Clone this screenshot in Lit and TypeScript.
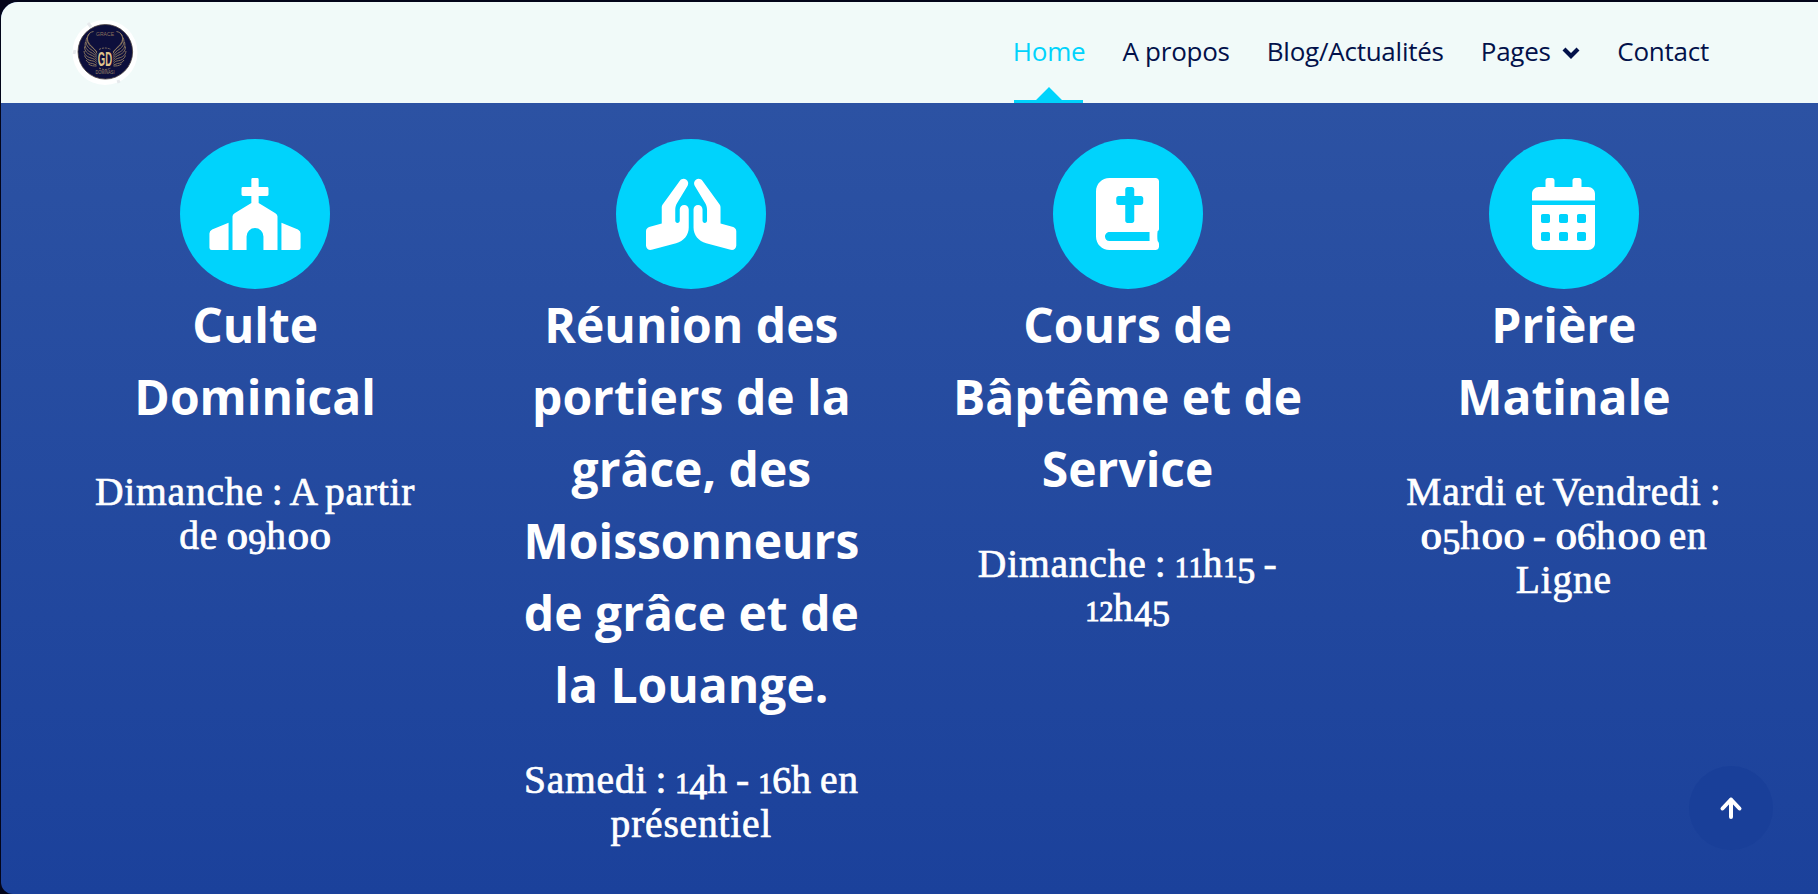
import { LitElement, html, css, svg } from "lit";
import { customElement } from "lit/decorators.js";

const church = svg`<path d="M304 0h32a10 10 0 0 1 10 10v54h60a10 10 0 0 1 10 10v44a10 10 0 0 1-10 10h-60v50l119 72q15 9 15 23v239H380V416a60 60 0 0 0-120 0v96H160V273q0-14 15-23l119-72v-50h-60a10 10 0 0 1-10-10V74a10 10 0 0 1 10-10h60V10a10 10 0 0 1 10-10zM-4 395q0-20 19-29l117-48v194H12q-16 0-16-16zM644 395q0-20-19-29l-117-48v194h120q16 0 16-16z"/>`;
const hand = "M272 192c-17.700 0-32 14.300-32 32v80c0 8.800-7.200 16-16 16s-16-7.200-16-16v-76.700c0-17.300 4.700-34.200 13.600-49l74.200-123.600c9.100-15.200 4.200-34.800-11-43.900s-33.400-4.200-44 9L117.200 190.300C111 199.500 112 210 112 220v102.900L21.900 348.900C8.800 353.300 0 365.500 0 379.200V480c0 21 19.800 36.400 40.200 31l173.600-46.900C268.700 449.400 304 405.400 304 352V224c0-17.700-14.300-32-32-32z";
const hands = svg`<path d=${hand}/><path d=${hand} transform="translate(642 0) scale(-1 1)"/>`;
const bible = svg`<path fill-rule="evenodd" d="M448 358.400V25.600C448 9.600 438.400 0 422.400 0H96C41.600 0 0 41.600 0 96v320c0 54.400 41.600 96 96 96h326.400c12.800 0 25.600-9.600 25.600-25.600v-16c0-9.600-3.200-16-9.600-22.400-3.200-16-3.200-54.400 0-70.400 6.400-3.200 9.600-9.600 9.600-19.200zM144 144c0-8.800 7.200-16 16-16h48V80c0-8.800 7.200-16 16-16h32c8.800 0 16 7.200 16 16v48h48c8.800 0 16 7.200 16 16v32c0 8.800-7.200 16-16 16h-48v112c0 8.800-7.200 16-16 16h-32c-8.800 0-16-7.200-16-16V192h-48c-8.800 0-16-7.200-16-16zM380.800 448H96c-19.200 0-32-12.800-32-32s16-32 32-32h284.800z"/>`;
const calendar = svg`<path fill-rule="evenodd" d="M0 464c0 26.500 21.500 48 48 48h352c26.500 0 48-21.500 48-48V192H0zm320-196c0-6.600 5.400-12 12-12h40c6.600 0 12 5.400 12 12v40c0 6.600-5.400 12-12 12h-40c-6.600 0-12-5.400-12-12zm0 128c0-6.600 5.400-12 12-12h40c6.600 0 12 5.400 12 12v40c0 6.600-5.400 12-12 12h-40c-6.600 0-12-5.400-12-12zM192 268c0-6.600 5.400-12 12-12h40c6.600 0 12 5.400 12 12v40c0 6.600-5.400 12-12 12h-40c-6.600 0-12-5.400-12-12zm0 128c0-6.600 5.400-12 12-12h40c6.600 0 12 5.400 12 12v40c0 6.600-5.400 12-12 12h-40c-6.600 0-12-5.400-12-12zM64 268c0-6.600 5.400-12 12-12h40c6.600 0 12 5.400 12 12v40c0 6.600-5.400 12-12 12H76c-6.600 0-12-5.400-12-12zm0 128c0-6.600 5.400-12 12-12h40c6.600 0 12 5.400 12 12v40c0 6.600-5.400 12-12 12H76c-6.600 0-12-5.400-12-12zM400 64h-48V16c0-8.800-7.200-16-16-16h-32c-8.800 0-16 7.200-16 16v48H160V16c0-8.800-7.200-16-16-16h-32c-8.800 0-16 7.200-16 16v48H48C21.500 64 0 85.500 0 112v48h448v-48c0-26.500-21.500-48-48-48z"/>`;

const services = [
  { icon: church, box: "0 0 640 512", title: ["Culte", "Dominical"], time: ["Dimanche : A partir", "de 09h00"] },
  { icon: hands, box: "0 0 640 512", title: ["Réunion des", "portiers de la", "grâce, des", "Moissonneurs", "de grâce et de", "la Louange."], time: ["Samedi : 14h - 16h en", "présentiel"] },
  { icon: bible, box: "0 0 448 512", title: ["Cours de", "Bâptême et de", "Service"], time: ["Dimanche : 11h15 -", "12h45"] },
  { icon: calendar, box: "0 0 448 512", title: ["Prière", "Matinale"], time: ["Mardi et Vendredi :", "05h00 - 06h00 en", "Ligne"] },
];

// Old-style figures: 0-2 sit at x-height, 3-5, 7 and 9 hang below the baseline.
const figureClass = (c: string) =>
  c === "0" ? "fig zero" : "12".includes(c) ? "fig" : "68".includes(c) ? "fig tall" : "fig low";

const figures = (line: string) =>
  line.split(/(\d)/).map((c) => (/^\d$/.test(c) ? html`<span class=${figureClass(c)}>${c}</span>` : c));

const wing = svg`
  <path d="M93.500 31.500c-5.500 1-7 5.500-5.500 10 1.500 4 6 6.500 9 10.500"/>
  <path d="M89.500 33.500c-3.500 4-3 9 1 12.500 3 2.500 5.500 4.500 6.500 7.500"/>
  <path d="M87 37.500c-2.500 5 0 9.500 4 12 2.500 1.500 4.500 3.500 5.500 6"/>
  <path d="M85.500 42c-1.500 5 1.500 8.500 5.500 10.500 2 1 4.500 2.500 5.500 5"/>
  <path d="M84.500 46.500c0 5 3 7 6.500 8.500 2.500 1 4.500 2.500 5.500 4.500"/>
  <path d="M84 51c.5 4.500 3.500 6 7 7 2.500.7 4.500 1.500 5.500 3.500"/>
  <path d="M84.500 55.500c1 3.500 4 4.700 7 5.200 2.500.4 4 1 5 2.800"/>
  <path d="M86 60c1.500 2.500 4 3.300 6.500 3.500l4 1.500"/>
  <path d="M88.500 64c2.500 2 5.500 2 8 2"/>`;

@customElement("app-root")
export class AppRoot extends LitElement {
  static styles = css`
    :host { display: block; width: 1818px; height: 894px; overflow: hidden; background: #03051a; font-family: "Open Sans", sans-serif; }
    .page { box-sizing: border-box; height: 894px; padding: 2px 0 0 1px; }
    .frame { position: relative; height: 892px; display: flex; flex-direction: column; overflow: hidden; border-radius: 17px 0 0 12px; background: linear-gradient(#2c52a3 101px, #1b419b); }
    header { flex: none; height: 101px; background: #f1faf9; display: flex; justify-content: space-between; box-sizing: border-box; padding: 0 109px 0 69px; }
    .logo { width: 70px; height: 70px; margin-top: 15px; }
    nav { display: flex; gap: 37px; font-size: 26px; line-height: 97px; letter-spacing: -0.240px; color: #02114a; }
    nav a { white-space: nowrap; display: flex; align-items: center; padding-bottom: 3px; }
    .active { color: #00d3fc; position: relative; }
    .mark { position: absolute; left: 1px; bottom: 0; width: 69px; height: 16px; }
    .chev { width: 18px; height: 12px; margin: 3px 0 0 11.500px; }
    main { display: grid; grid-template-columns: repeat(4, 1fr); padding: 36px 36px 0; }
    section { text-align: center; color: #fff; display: flex; flex-direction: column; align-items: center; white-space: nowrap; }
    .disc { width: 150px; height: 150px; border-radius: 50%; background: #00d3fc; display: flex; align-items: center; justify-content: center; }
    .disc svg { height: 72px; fill: #fff; overflow: visible; }
    h2 { margin: 0; font-size: 48px; line-height: 72px; font-weight: 700; }
    p { margin: 38px 0 0; font: 39.500px/43.800px "Liberation Serif", serif; letter-spacing: 0.800px; word-spacing: -2.500px; -webkit-text-stroke: 0.700px #fff; }
    .line { display: block; height: 43.800px; }
    .fig { display: inline-block; width: 14px; font-size: 28.500px; line-height: 28px; letter-spacing: 0; -webkit-text-stroke-width: 0.900px; }
    .zero { margin: 0 4px; transform: scaleX(1.480); }
    .low { position: relative; top: 5.500px; width: 18px; font-size: 36px; }
    .tall { width: 19px; font-size: 38px; }
    .top { position: absolute; right: 45px; top: 764px; width: 84px; height: 84px; border-radius: 50%; background: #193f99; }
    .top svg { display: block; width: 84px; height: 84px; }
  `;

  render() {
    return html`<div class="page"><div class="frame">
      <header>
        ${this.logo()}
        <nav>
          <a class="active">Home<svg class="mark" viewBox="0 0 69 16" fill="#00d3fc"><path d="M0 13h22L35 0l13 13h21v3H0z"/></svg></a>
          <a>A propos</a><a>Blog/Actualités</a>
          <a>Pages<svg class="chev" viewBox="0 0 18 12"><path d="M2 2l7 7 7-7" fill="none" stroke="#02114a" stroke-width="4.200"/></svg></a>
          <a>Contact</a>
        </nav>
      </header>
      <main>${services.map((s) => html`<section>
        <div class="disc"><svg viewBox=${s.box}>${s.icon}</svg></div>
        <h2>${s.title.map((t, i) => html`${i ? html`<br>` : ""}${t}`)}</h2>
        <p>${s.time.map((t) => html`<span class="line">${figures(t)}</span>`)}</p>
      </section>`)}</main>
      <div class="top"><svg viewBox="0 0 84 84" fill="none" stroke="#fff" stroke-width="4" stroke-linecap="round"><path d="M42 51V33.500M33.500 42.500l8.500-9 8.500 9" stroke-linejoin="round"/></svg></div>
    </div></div>`;
  }

  logo() {
    return html`<svg class="logo" viewBox="70 17 70 70" text-anchor="middle" font-family="Liberation Sans, sans-serif">
      <circle cx="105" cy="52.500" r="32.500" fill="#fff"/>
      <path d="M88 23l3 4M118 80l1 3M75 50l-1 4" stroke="#e6e9ec" stroke-width="3"/>
      <circle cx="105.300" cy="51.800" r="27.300" fill="#0d0f3c" stroke="#4c4340" stroke-width=".8"/>
      <g fill="none" stroke="#927e62" stroke-width=".9">${wing}<g transform="translate(210 0) scale(-1 1)">${wing}</g>
        <path d="M99 49.500q6-3 12 0M99 68q6 3 12 0" stroke-dasharray="2 1"/></g>
      <text x="105" y="35.500" font-size="5" fill="#8d735c" textLength="18">GRACE</text>
      <text transform="translate(105 65.800) scale(.62 1)" font-size="20" font-weight="700" fill="#e0c48c" textLength="23" lengthAdjust="spacingAndGlyphs">GD</text>
      <text x="105" y="73.800" font-size="5" fill="#a08b68" textLength="19" lengthAdjust="spacingAndGlyphs">DOMINASI</text>
    </svg>`;
  }
}
